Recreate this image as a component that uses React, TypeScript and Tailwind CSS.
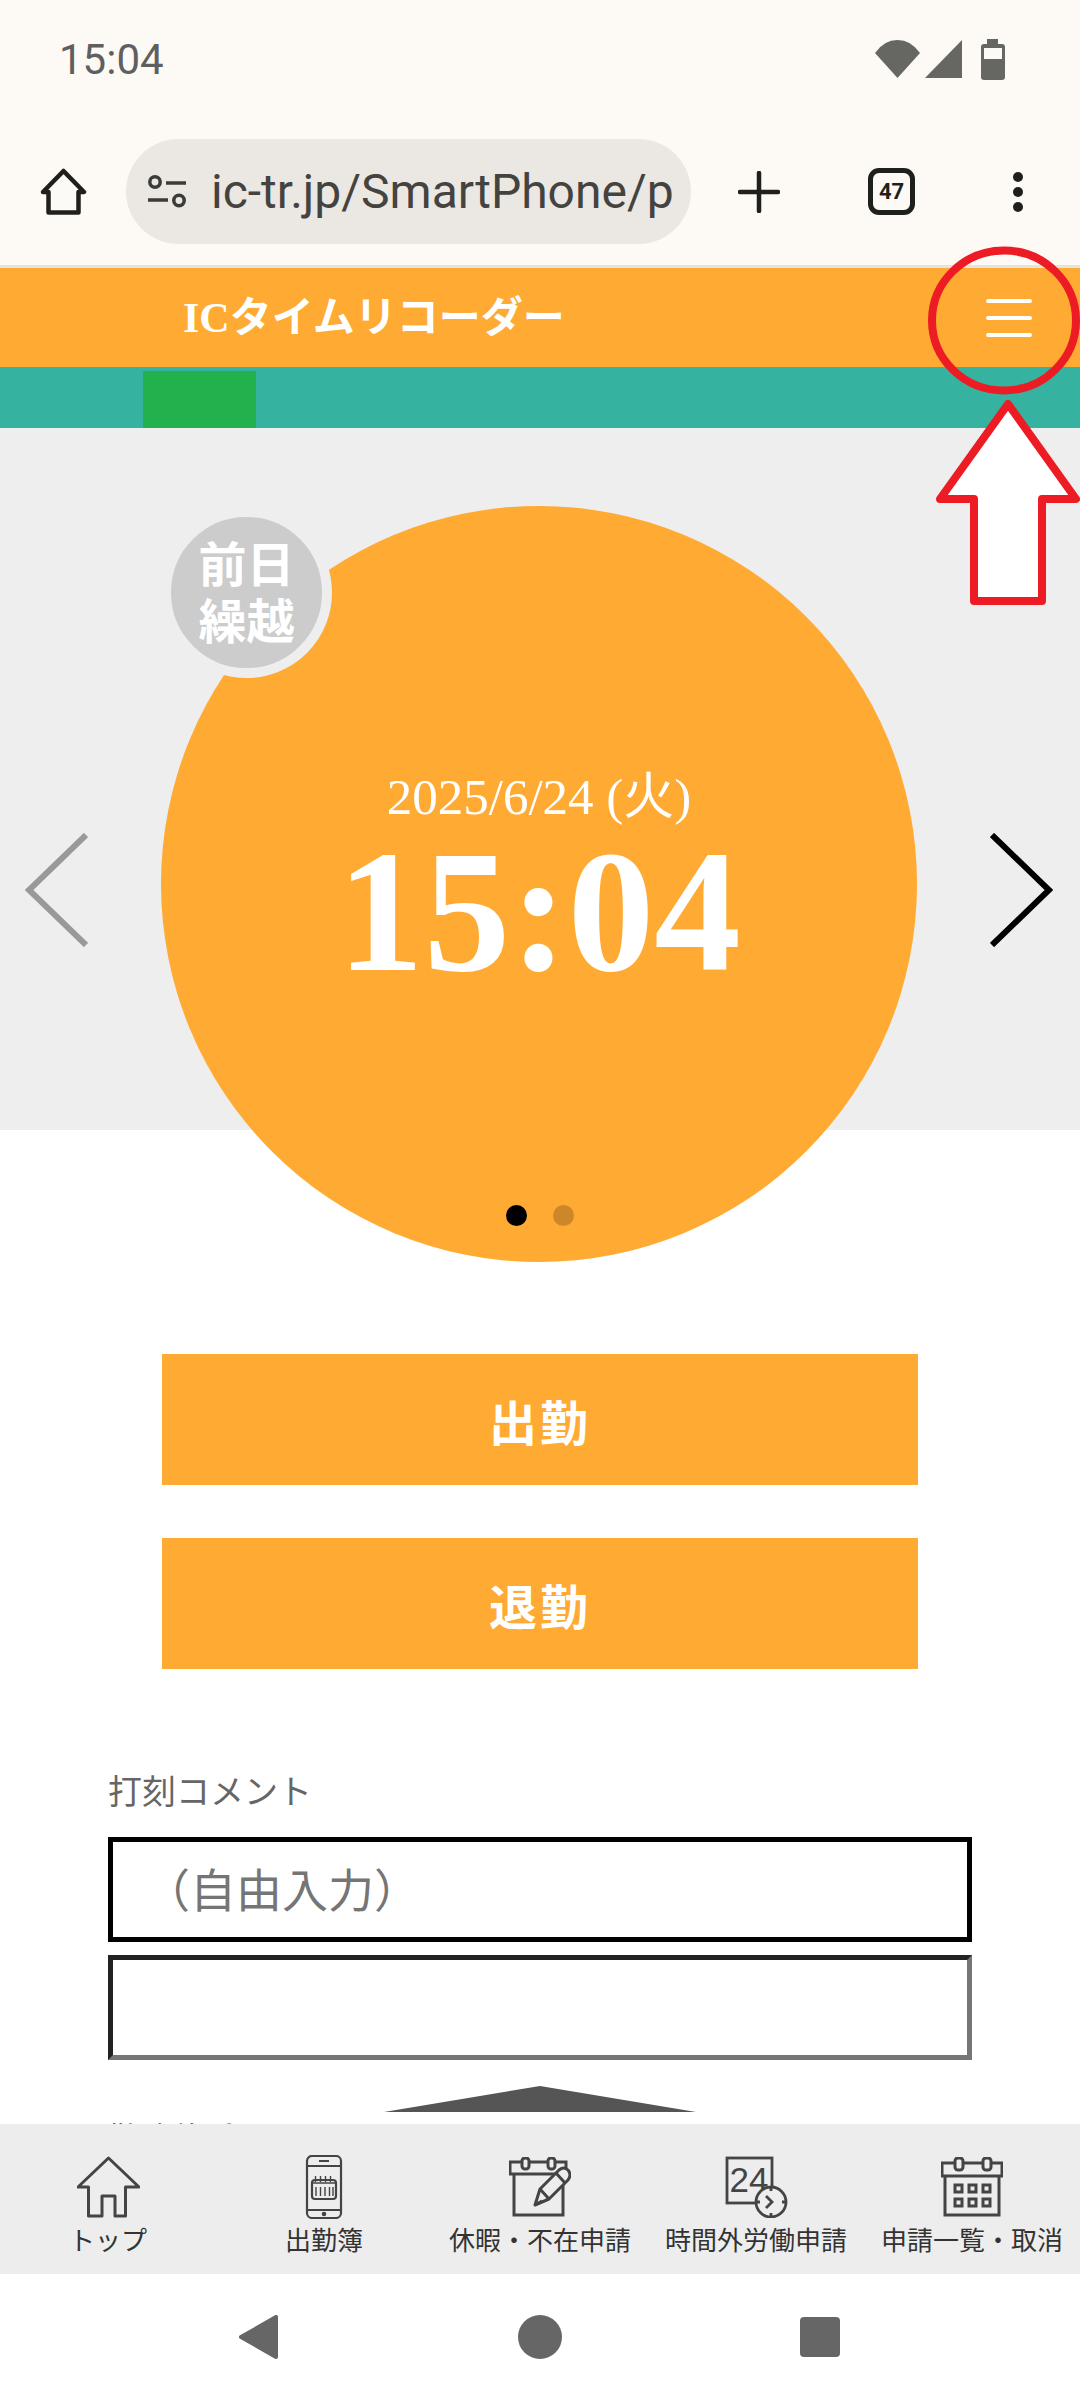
const jp = '"Noto Sans CJK JP", "Noto Sans", sans-serif'

function StatusBar() {
  return (
    <div className="flex h-[118px] items-center justify-between pl-[59px] pr-[75px]">
      <span className="text-[42px] text-[#5f5f5f]" style={{ fontFamily: "Roboto, sans-serif" }}>15:04</span>
      <div className="flex items-center">
        <svg width="45" height="38" viewBox="0 0 45 38" fill="#666663">
          <path d="M0 13Q9 0 22.500 0Q36 0 45 13L22.500 38Z" />
        </svg>
        <svg className="ml-[5px]" width="37" height="38" viewBox="0 0 37 38" fill="#666663">
          <path d="M37 0V38H0Z" />
        </svg>
        <svg className="ml-[19px]" width="24" height="41" viewBox="0 0 24 41" fill="#666663">
          <path d="M6 0H17V5H21Q24 5 24 8V38Q24 41 21 41H3Q0 41 0 38V8Q0 5 3 5H6Z" />
          <rect x="3" y="9" width="18" height="11" fill="#fdfaf5" />
        </svg>
      </div>
    </div>
  )
}

function Toolbar() {
  return (
    <div className="flex h-[147px] items-center border-b-0 pl-[40px]">
      <svg width="47" height="47" viewBox="0 0 47 47" fill="none" stroke="#1f1f1b" strokeWidth="4.500" strokeLinejoin="round">
        <path d="M23.500 3L44 24H38.500V44.500H8.500V24H3Z" />
      </svg>
      <div className="ml-[39px] flex h-[105px] w-[565px] items-center rounded-full bg-[#ebe8e3] pl-[22px]">
        <svg width="39" height="33" viewBox="0 0 39 33" fill="none" stroke="#3c3b37" strokeWidth="3.500">
          <circle cx="7" cy="7" r="5.200" />
          <path d="M18 8H38M0 25H20" />
          <circle cx="31" cy="25.500" r="5.200" />
        </svg>
        <span className="ml-[24px] text-[48px] leading-none text-[#45433f]" style={{ fontFamily: "Roboto, sans-serif" }}>ic-tr.jp/SmartPhone/p</span>
      </div>
      <svg className="ml-[47px]" width="42" height="42" viewBox="0 0 42 42" stroke="#1f1f1b" strokeWidth="4.500" strokeLinecap="round">
        <path d="M21 2V40M2 21H40" />
      </svg>
      <div className="ml-[88px] flex h-[47px] w-[47px] items-center justify-center rounded-[11px] border-[5px] border-[#1f1f1b] text-[22px] font-bold text-[#1f1f1b]" style={{ fontFamily: "Roboto, sans-serif" }}>47</div>
      <svg className="ml-[98px]" width="10" height="42" viewBox="0 0 10 42" fill="#1f1f1b">
        <circle cx="5" cy="6" r="5" />
        <circle cx="5" cy="21" r="5" />
        <circle cx="5" cy="36" r="5" />
      </svg>
    </div>
  )
}

function Hero() {
  return (
    <div className="flex h-[702px] items-start bg-[#eeeeee] pl-[25px] pt-[78px]">
      <svg className="mt-[327px]" width="63" height="114" viewBox="0 0 63 114" fill="none" stroke="#999999" strokeWidth="6">
        <path d="M61 2L4 57L61 112" />
      </svg>
      <div className="relative ml-[73px] flex h-[756px] w-[756px] flex-col items-center rounded-full bg-[#ffaa33] pt-[261px] text-white">
        <div className="absolute left-0 top-[1px] flex h-[171px] w-[171px] flex-col items-center justify-center rounded-full border-[10px] border-[#eeeeee] bg-[#cccccc] pb-[5px] text-[48px] font-bold leading-[57px] text-white" style={{ fontFamily: jp }}>
          <span>前日</span>
          <span>繰越</span>
        </div>
        <div className="h-[60px] text-[51px] leading-[60px]" style={{ fontFamily: '"Liberation Serif", "Noto Sans CJK JP", serif' }}>2025/6/24 (火)</div>
        <div className="h-[170px] text-[173px] font-bold leading-[170px]" style={{ fontFamily: '"Liberation Serif", serif' }}>15:04</div>
        <div className="ml-[2px] mt-[208px] flex gap-[26px]">
          <span className="h-[21px] w-[21px] rounded-full bg-black" />
          <span className="h-[21px] w-[21px] rounded-full bg-black/20" />
        </div>
      </div>
      <svg className="ml-[73px] mt-[327px]" width="63" height="114" viewBox="0 0 63 114" fill="none" stroke="#000000" strokeWidth="6">
        <path d="M2 2L59 57L2 112" />
      </svg>
    </div>
  )
}

function PunchButton({ label }: { label: string }) {
  return (
    <button className="flex h-[131px] w-[756px] items-center justify-center bg-[#ffaa33] text-[48px] font-bold tracking-[3px] text-white" style={{ fontFamily: jp }}>
      {label}
    </button>
  )
}

function Main() {
  return (
    <div className="min-h-0 flex-1 overflow-hidden">
      <Hero />
      <div className="mt-[224px] flex flex-col items-center gap-[53px]">
        <PunchButton label="出勤" />
        <PunchButton label="退勤" />
      </div>
      <div className="mx-[108px] mt-[101px]" style={{ fontFamily: jp }}>
        <label className="block h-[40px] text-[34px] leading-[40px] text-[#666666]">打刻コメント</label>
        <input
          readOnly
          placeholder="（自由入力）"
          className="mt-[27px] block h-[105px] w-full border-[5px] border-black pb-[6px] pl-[31px] text-[46px] outline-none placeholder:text-[#757575]"
        />
        <textarea
          readOnly
          className="mt-[13px] block h-[105px] w-full resize-none border-[5px] border-[#222222] border-r-[#767676] border-b-[#767676] outline-none"
        />
        <svg className="mx-auto mt-[26px]" width="312" height="26" viewBox="0 0 312 26" fill="#555555">
          <path d="M156 0L312 26H0Z" />
        </svg>
        <div className="mt-[4px] h-[40px] text-[32px] leading-[40px] text-[#666666]">勤務体系</div>
      </div>
    </div>
  )
}

function NavIcon({ name }: { name: string }) {
  if (name === "home") {
    return (
      <svg width="63" height="62" viewBox="0 0 63 62" fill="none" stroke="#444444" strokeWidth="3" strokeLinejoin="round">
        <path d="M31.500 2L62 31H48.500V60H38V40H25V60H11.500V31H1Z" />
      </svg>
    )
  }
  if (name === "phone") {
    return (
      <svg width="38" height="64" viewBox="0 0 38 64" fill="none" stroke="#444444" strokeWidth="2.200">
        <rect x="2" y="1" width="34" height="62" rx="5" />
        <path d="M2 11H36M2 55H36M14 6H24" />
        <circle cx="19" cy="59" r="1.200" fill="#444444" />
        <rect x="7" y="25" width="24" height="19" rx="3" />
        <path d="M10.500 21V27M15.500 21V27M20.500 21V27M25.500 21V27M8 28H30M11 32V41M15.500 32V41M20 32V41M24.500 32V41M28 32V41" strokeWidth="1.400" />
      </svg>
    )
  }
  if (name === "note") {
    return (
      <svg width="62" height="60" viewBox="0 0 62 60" fill="none" stroke="#444444" strokeWidth="3">
        <path d="M5 17V58H54V17" />
        <rect x="1" y="5" width="56" height="12" />
        <rect x="13" y="1" width="7" height="11" rx="3" fill="#ededed" />
        <rect x="39" y="1" width="7" height="11" rx="3" fill="#ededed" />
        <path d="M26 48L31 32L50 13Q55 9 59 13Q63 18 59 23L40 42Z" fill="#ededed" strokeLinejoin="round" />
        <path d="M31 32L40 42M47 16L56 26M26 48L33 44" />
      </svg>
    )
  }
  if (name === "overtime") {
    return (
      <svg width="63" height="62" viewBox="0 0 63 62" fill="none" stroke="#444444" strokeWidth="2.800">
        <rect x="2" y="2" width="45" height="45" />
        <text x="24" y="36" textAnchor="middle" fontSize="35" fill="#444444" stroke="none" fontFamily='"Liberation Sans", sans-serif'>24</text>
        <circle cx="46" cy="46" r="15" fill="#ededed" />
        <path d="M46 31V35M46 57V61M31 46H35M57 46H61M41 40L47 46L41 52" />
      </svg>
    )
  }
  return (
    <svg width="62" height="60" viewBox="0 0 62 60" fill="none" stroke="#444444" strokeWidth="3">
      <path d="M4 19V58H58V19" />
      <rect x="1" y="6" width="60" height="13" />
      <rect x="14" y="1" width="8" height="12" rx="3" fill="#ededed" />
      <rect x="42" y="1" width="8" height="12" rx="3" fill="#ededed" />
      <rect x="14" y="28" width="7" height="7" />
      <rect x="28" y="28" width="7" height="7" />
      <rect x="42" y="28" width="7" height="7" />
      <rect x="14" y="42" width="7" height="7" />
      <rect x="28" y="42" width="7" height="7" />
      <rect x="42" y="42" width="7" height="7" />
    </svg>
  )
}

const tabs = [
  { icon: "home", label: "トップ" },
  { icon: "phone", label: "出勤簿" },
  { icon: "note", label: "休暇・不在申請" },
  { icon: "overtime", label: "時間外労働申請" },
  { icon: "calendar", label: "申請一覧・取消" },
]

function TabBar() {
  return (
    <div className="grid h-[150px] shrink-0 grid-cols-5 bg-[#ededed]" style={{ fontFamily: jp }}>
      {tabs.map((tab) => (
        <div key={tab.label} className="flex flex-col items-center">
          <div className="mt-[31px] flex h-[64px] items-center justify-center">
            <NavIcon name={tab.icon} />
          </div>
          <span className="mt-[3px] whitespace-nowrap text-[26px] leading-[34px] text-[#333333]">{tab.label}</span>
        </div>
      ))}
    </div>
  )
}

function SystemNav() {
  return (
    <div className="flex h-[126px] shrink-0 items-center bg-white pl-[239px]">
      <svg width="39" height="44" viewBox="0 0 39 44" fill="#666666" stroke="#666666" strokeWidth="4" strokeLinejoin="round">
        <path d="M37 2V42L2 22Z" />
      </svg>
      <div className="ml-[240px] h-[44px] w-[44px] rounded-full bg-[#666666]" />
      <div className="ml-[238px] h-[40px] w-[40px] rounded-[4px] bg-[#666666]" />
    </div>
  )
}

export default function App() {
  return (
    <div className="relative flex h-[2400px] w-[1080px] flex-col overflow-hidden bg-white">
      <div className="shrink-0 border-b-[3px] border-[#e6e3de] bg-[#fdfaf5]">
        <StatusBar />
        <Toolbar />
      </div>
      <div className="flex h-[99px] shrink-0 items-center justify-between bg-[#ffaa33] pl-[183px] pr-[48px]">
        <h1 className="pt-[2px] text-[42px] font-bold text-white" style={{ fontFamily: '"Liberation Serif", "Noto Sans CJK JP", serif' }}>ICタイムリコーダー</h1>
        <button className="flex w-[46px] flex-col gap-[13px]">
          <span className="h-[4px] rounded-full bg-white" />
          <span className="h-[4px] rounded-full bg-white" />
          <span className="h-[4px] rounded-full bg-white" />
        </button>
      </div>
      <div className="flex h-[61px] shrink-0 items-end bg-[#36b2a0] pl-[143px]">
        <div className="h-[57px] w-[113px] bg-[#22b14c]" />
      </div>
      <Main />
      <TabBar />
      <SystemNav />
      {/* red annotation drawn on top of the page */}
      <svg className="pointer-events-none absolute left-0 top-0" width="1080" height="620" viewBox="0 0 1080 620" fill="none" stroke="#ed1c24" strokeWidth="8" strokeLinejoin="round">
        <ellipse cx="1004" cy="320.500" rx="72" ry="70" />
        <path d="M1008 404L1076 499H1042V601H974V499H940Z" fill="#ffffff" />
      </svg>
    </div>
  )
}
